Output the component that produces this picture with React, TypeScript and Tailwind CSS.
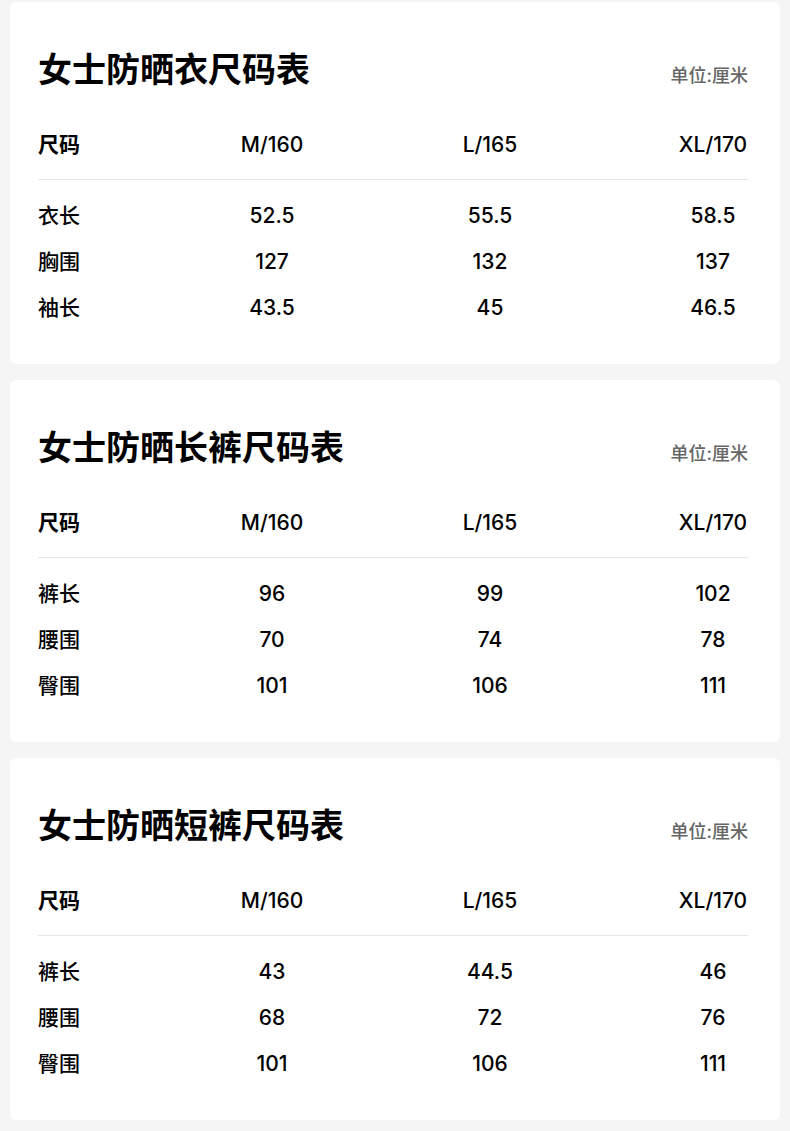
import React from "react";

type Table = {
  title: string;
  rows: { label: string; values: string[] }[];
};

const sizes = ["M/160", "L/165", "XL/170"];

const tables: Table[] = [
  {
    title: "女士防晒衣尺码表",
    rows: [
      { label: "衣长", values: ["52.5", "55.5", "58.5"] },
      { label: "胸围", values: ["127", "132", "137"] },
      { label: "袖长", values: ["43.5", "45", "46.5"] },
    ],
  },
  {
    title: "女士防晒长裤尺码表",
    rows: [
      { label: "裤长", values: ["96", "99", "102"] },
      { label: "腰围", values: ["70", "74", "78"] },
      { label: "臀围", values: ["101", "106", "111"] },
    ],
  },
  {
    title: "女士防晒短裤尺码表",
    rows: [
      { label: "裤长", values: ["43", "44.5", "46"] },
      { label: "腰围", values: ["68", "72", "76"] },
      { label: "臀围", values: ["101", "106", "111"] },
    ],
  },
];

const Row = ({
  label,
  values,
  head,
}: {
  label: string;
  values: string[];
  head?: boolean;
}) => (
  <div className={`flex items-center text-[21px] text-black ${head ? "h-[28px]" : "h-[46px]"}`}>
    <div className={`w-[174px] ${head ? "font-bold" : "font-medium"}`}>{label}</div>
    <div className="w-[120px] text-center font-medium">{values[0]}</div>
    <div className="ml-[98px] w-[120px] text-center font-medium">{values[1]}</div>
    <div className="ml-auto w-[70px] text-center font-medium">{values[2]}</div>
  </div>
);

const SizeCard = ({ table }: { table: Table }) => (
  <div className="mx-[10px] rounded-[6px] bg-white pl-[28px] pr-[32px] pt-[49px] pb-[33px]">
    <div className="flex items-baseline justify-between">
      <h2 className="text-[34px] leading-[38px] font-bold text-black">{table.title}</h2>
      <span className="text-[18px] font-medium text-[#666666]">单位:厘米</span>
    </div>
    <div className="mt-[42px]">
      <Row label="尺码" values={sizes} head />
    </div>
    <div className="mt-[20px] h-px bg-[#e6e6e6]" />
    <div className="mt-[13px]">
      {table.rows.map((r) => (
        <Row key={r.label} label={r.label} values={r.values} />
      ))}
    </div>
  </div>
);

export default function App() {
  return (
    <div
      className="min-h-[1131px] bg-[#f5f5f5] pt-[2px] flex flex-col gap-[16px]"
      style={{ fontFamily: 'Inter, "Noto Sans CJK SC", sans-serif' }}
    >
      {tables.map((t) => (
        <SizeCard key={t.title} table={t} />
      ))}
    </div>
  );
}
